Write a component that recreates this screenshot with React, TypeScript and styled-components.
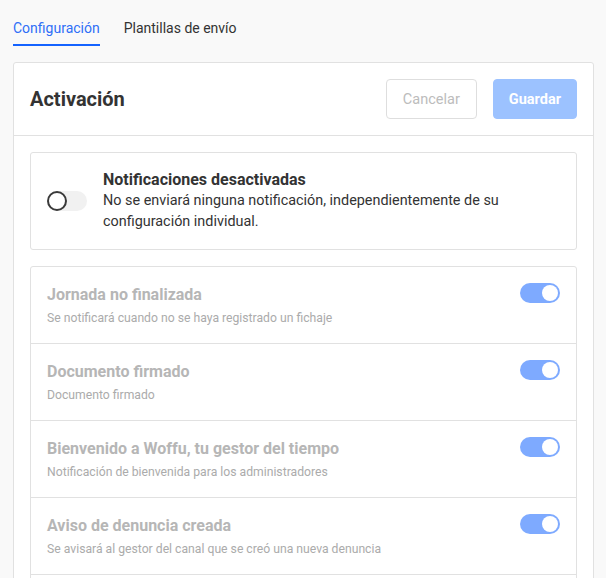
import React from "react";
import styled, { createGlobalStyle } from "styled-components";

const GlobalStyle = createGlobalStyle`
  html, body {
    margin: 0;
    padding: 0;
    background: #f9f9f9;
    overflow: hidden;
  }
  body {
    font-family: Roboto, "Noto Sans", Arial, sans-serif;
    color: #333;
    -webkit-font-smoothing: antialiased;
  }
  * { box-sizing: border-box; }
`;

const Page = styled.div`
  padding: 18px 12px 0 13px;
`;

const Tabs = styled.nav`
  display: flex;
  gap: 24px;
`;

const Tab = styled.button<{ $active?: boolean }>`
  appearance: none;
  background: none;
  border: none;
  padding: 0 0 6px 0;
  margin: 0;
  font-family: inherit;
  font-size: 14px;
  line-height: 20px;
  color: ${(p) => (p.$active ? "#2f6ff7" : "#333")};
  border-bottom: 2px solid ${(p) => (p.$active ? "#1463ff" : "transparent")};
  cursor: pointer;
`;

const Card = styled.section`
  margin-top: 16px;
  background: #fff;
  border: 1px solid #e1e1e1;
  border-radius: 3px;
`;

const CardHeader = styled.header`
  display: flex;
  align-items: center;
  justify-content: space-between;
  padding: 16px;
  border-bottom: 1px solid #e1e1e1;
`;

const CardTitle = styled.h2`
  margin: 0;
  font-size: 20px;
  font-weight: 700;
  color: #333;
`;

const Actions = styled.div`
  display: flex;
  gap: 16px;
`;

const Button = styled.button<{ $primary?: boolean }>`
  appearance: none;
  height: 40px;
  padding: 0 ${(p) => (p.$primary ? "15px" : "16px")};
  border-radius: 4px;
  font-family: inherit;
  font-size: 14.5px;
  font-weight: ${(p) => (p.$primary ? 700 : 400)};
  border: 1px solid ${(p) => (p.$primary ? "#9cc2ff" : "#dedede")};
  background: ${(p) => (p.$primary ? "#9cc2ff" : "#fff")};
  color: ${(p) => (p.$primary ? "#fff" : "#bcbcbc")};
`;

const CardBody = styled.div`
  padding: 16px;
  display: flex;
  flex-direction: column;
  gap: 16px;
`;

const Box = styled.div`
  border: 1px solid #e1e1e1;
  border-radius: 3px;
  background: #fff;
`;

const MasterRow = styled.div`
  display: flex;
  align-items: center;
  gap: 16px;
  padding: 16px 16px 17px 16px;
`;

const MasterText = styled.div`
  display: flex;
  flex-direction: column;
`;

const MasterTitle = styled.div`
  font-size: 16px;
  font-weight: 700;
  line-height: 21px;
  color: #333;
`;

const MasterDesc = styled.div`
  font-size: 14.4px;
  line-height: 21px;
  color: #333;
`;

const Row = styled.div`
  display: flex;
  align-items: flex-start;
  justify-content: space-between;
  padding: 16px;
  & + & {
    border-top: 1px solid #e1e1e1;
  }
`;

const RowText = styled.div`
  display: flex;
  flex-direction: column;
  gap: 2px;
`;

const RowTitle = styled.div`
  font-size: 16px;
  font-weight: 700;
  line-height: 24px;
  color: #b6b6b6;
`;

const RowDesc = styled.div`
  font-size: 12.2px;
  line-height: 18px;
  color: #ababab;
`;

const Switch = styled.span<{ $on?: boolean }>`
  position: relative;
  flex: none;
  display: inline-block;
  width: 40px;
  height: 20px;
  border-radius: 10px;
  background: ${(p) => (p.$on ? "#7eaaff" : "#f1f1f1")};
  &::after {
    content: "";
    position: absolute;
    top: ${(p) => (p.$on ? "2px" : "0")};
    left: ${(p) => (p.$on ? "22px" : "0")};
    width: ${(p) => (p.$on ? "16px" : "20px")};
    height: ${(p) => (p.$on ? "16px" : "20px")};
    box-sizing: border-box;
    border-radius: 50%;
    background: #fff;
    border: ${(p) => (p.$on ? "none" : "2px solid #3a3a3a")};
  }
`;

const notifications = [
  {
    title: "Jornada no finalizada",
    desc: "Se notificará cuando no se haya registrado un fichaje",
  },
  { title: "Documento firmado", desc: "Documento firmado" },
  {
    title: "Bienvenido a Woffu, tu gestor del tiempo",
    desc: "Notificación de bienvenida para los administradores",
  },
  {
    title: "Aviso de denuncia creada",
    desc: "Se avisará al gestor del canal que se creó una nueva denuncia",
  },
];

export default function App() {
  return (
    <>
      <GlobalStyle />
      <Page>
        <Tabs>
          <Tab $active>Configuración</Tab>
          <Tab>Plantillas de envío</Tab>
        </Tabs>
        <Card>
          <CardHeader>
            <CardTitle>Activación</CardTitle>
            <Actions>
              <Button>Cancelar</Button>
              <Button $primary>Guardar</Button>
            </Actions>
          </CardHeader>
          <CardBody>
            <Box>
              <MasterRow>
                <Switch />
                <MasterText>
                  <MasterTitle>Notificaciones desactivadas</MasterTitle>
                  <MasterDesc>
                    No se enviará ninguna notificación, independientemente de su
                    configuración individual.
                  </MasterDesc>
                </MasterText>
              </MasterRow>
            </Box>
            <Box>
              {notifications.map((n) => (
                <Row key={n.title}>
                  <RowText>
                    <RowTitle>{n.title}</RowTitle>
                    <RowDesc>{n.desc}</RowDesc>
                  </RowText>
                  <Switch $on />
                </Row>
              ))}
              <Row aria-hidden="true" />
            </Box>
          </CardBody>
        </Card>
      </Page>
    </>
  );
}
